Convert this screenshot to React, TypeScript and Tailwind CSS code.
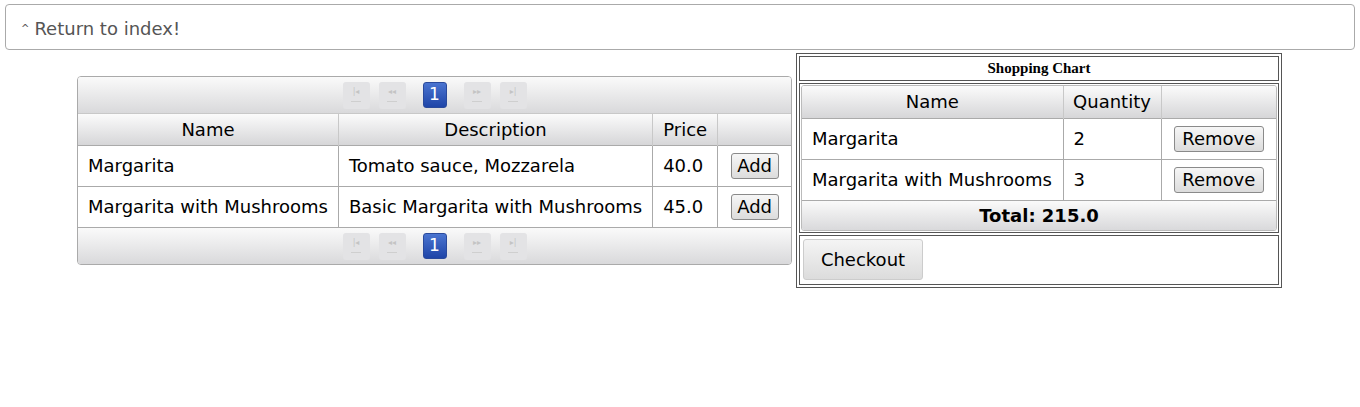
const products = [
  { name: "Margarita", description: "Tomato sauce, Mozzarela", price: "40.0" },
  { name: "Margarita with Mushrooms", description: "Basic Margarita with Mushrooms", price: "45.0" },
]

const cart = [
  { name: "Margarita", quantity: 2 },
  { name: "Margarita with Mushrooms", quantity: 3 },
]

const headGrad = "bg-[linear-gradient(to_bottom,#fbfbfb,#d6d6d8)]"
const barGrad = "bg-[linear-gradient(to_bottom,#fafafa,#d9d9db)]"

function PageIcon({ kind }: { kind: string }) {
  return (
    <span className="flex h-[27px] w-[27px] flex-col items-center justify-center rounded-[3px] bg-[#e3e3e5] text-[8px] leading-none text-[#c4c4c4]">
      <span>{kind}</span>
      <span className="mt-[5px] h-px w-[10px] bg-[#cfcfcf]" />
    </span>
  )
}

function Paginator({ border }: { border: string }) {
  return (
    <div className={`flex h-[37px] items-center justify-center ${barGrad} ${border}`}>
      <div className="flex items-center gap-[9px]">
        <PageIcon kind="|◂" />
        <PageIcon kind="◂◂" />
        <span className="mx-[8px] flex h-[26px] w-[24px] items-center justify-center rounded-[3px] border border-[#2a4a9c] bg-[linear-gradient(to_bottom,#4a74d0,#1f45a8)] text-[17px] text-white">
          1
        </span>
        <PageIcon kind="▸▸" />
        <PageIcon kind="▸|" />
      </div>
    </div>
  )
}

function GrayButton({ label, className }: { label: string; className: string }) {
  return (
    <button
      className={`rounded-[3px] border border-[#8a8a8a] bg-[linear-gradient(to_bottom,#f6f6f6,#dcdcdc)] text-[18px] leading-none text-black ${className}`}
    >
      {label}
    </button>
  )
}

export default function App() {
  return (
    <div className="h-[407px] bg-white pt-[4px] font-['DejaVu_Sans',sans-serif] text-[#222]">
      <div className="mx-[5px] flex h-[46px] items-center rounded-[4px] border border-[#aaaaaa] pb-px pl-[15px] pt-[3px] text-[18px] text-[#555]">
        <span className="mr-[5px] text-[10px]">^</span>
        Return to index!
      </div>

      <div className="flex">
        <div className="ml-[77px] mt-[26px] w-[715px] self-start overflow-hidden rounded-[4px] border border-[#aaaaaa]">
          <Paginator border="border-b border-[#c8c8c8]" />
          <table className="w-full border-collapse text-[18px] text-black">
            <thead>
              <tr className={`h-[31px] ${headGrad}`}>
                <th className="w-[260px] border-r border-[#c8c8c8] font-normal">Name</th>
                <th className="w-[314px] border-r border-[#c8c8c8] font-normal">Description</th>
                <th className="w-[65px] border-r border-[#c8c8c8] font-normal">Price</th>
                <th />
              </tr>
            </thead>
            <tbody>
              {products.map((p) => (
                <tr key={p.name} className="h-[41px] border-t border-[#aaaaaa]">
                  <td className="whitespace-nowrap border-r border-[#aaaaaa] px-[10px]">{p.name}</td>
                  <td className="whitespace-nowrap border-r border-[#aaaaaa] px-[10px]">{p.description}</td>
                  <td className="border-r border-[#aaaaaa] px-[10px]">{p.price}</td>
                  <td className="text-center">
                    <GrayButton label="Add" className="h-[26px] w-[48px]" />
                  </td>
                </tr>
              ))}
            </tbody>
          </table>
          <Paginator border="border-t border-[#aaaaaa]" />
        </div>

        <div className="ml-[4px] mt-[3px] w-[486px] self-start border border-[#555] p-[2px]">
          <div className="flex h-[25px] items-center justify-center border border-[#555] font-['Liberation_Serif',serif] text-[15px] font-bold text-black">
            Shopping Chart
          </div>
          <div className="mt-[2px] border border-[#555] p-px">
            <div className="overflow-hidden rounded-[3px] border border-[#bbbbbb]">
              <table className="w-full border-collapse text-[18px] text-black">
                <thead>
                  <tr className={`h-[32px] ${headGrad}`}>
                    <th className="w-[261px] border-r border-[#c8c8c8] font-normal">Name</th>
                    <th className="w-[98px] border-r border-[#c8c8c8] font-normal">Quantity</th>
                    <th />
                  </tr>
                </thead>
                <tbody>
                  {cart.map((c) => (
                    <tr key={c.name} className="h-[41px] border-t border-[#aaaaaa]">
                      <td className="whitespace-nowrap border-r border-[#aaaaaa] px-[10px]">{c.name}</td>
                      <td className="border-r border-[#aaaaaa] px-[10px]">{c.quantity}</td>
                      <td className="text-center">
                        <GrayButton label="Remove" className="h-[26px] w-[90px]" />
                      </td>
                    </tr>
                  ))}
                  <tr className={`h-[30px] border-t border-[#aaaaaa] ${barGrad}`}>
                    <td colSpan={3} className="text-center font-bold">
                      Total: 215.0
                    </td>
                  </tr>
                </tbody>
              </table>
            </div>
          </div>
          <div className="mt-[2px] h-[50px] border border-[#555] p-[3px]">
            <button className="h-[41px] w-[120px] rounded-[3px] border border-[#cccccc] bg-[linear-gradient(to_bottom,#f4f4f4,#dcdcdc)] text-[18px] text-black">
              Checkout
            </button>
          </div>
        </div>
      </div>
    </div>
  )
}
